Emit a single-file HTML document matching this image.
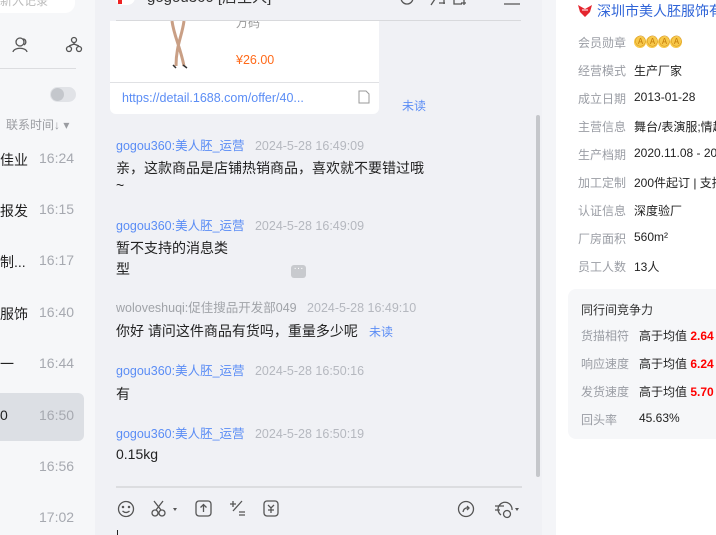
<!DOCTYPE html>
<html><head><meta charset="utf-8"><style>
*{margin:0;padding:0;box-sizing:border-box}
body{width:716px;height:535px;overflow:hidden;position:relative;font-family:"Liberation Sans","Noto Sans CJK SC",sans-serif;background:#f4f5f8}
.a{position:absolute;white-space:nowrap}
#left{left:0;top:0;width:95px;height:535px;background:#f6f7f9}
#mid{left:95px;top:0;width:447px;height:535px;background:#f0f1f5}
#right{left:556px;top:0;width:160px;height:535px;background:#fff}
.t{color:#a6a9b0;font-size:14px;left:39px}
.n{color:#222;font-size:14px;left:0}
.s{color:#5b8df5;font-size:12.5px;left:116px}
.d{color:#b5b8bf}
.m{color:#222;font-size:14px;left:116px}
.l{color:#9a9da4;font-size:12px;left:578px}
.v{color:#222;font-size:12px;left:634px}
.ic{stroke:#555;fill:none;stroke-width:1.3}
</style></head><body>
<div class="a" id="left"></div>
<div class="a" style="left:0;top:-6px;width:75px;height:19px;background:#fff;border-radius:0 0 10px 0"></div>
<div class="a" style="left:0;top:-8px;font-size:12px;color:#bbb">新入记录</div>
<svg class="a" style="left:10px;top:35px" width="80" height="20"><g class="ic" stroke="#666"><circle cx="10" cy="7" r="4"/><path d="M3 17c1-5 13-5 14 0M13 4c3 0 4 4 1 6"/><circle cx="64" cy="5" r="2.5"/><circle cx="59" cy="14" r="2.5"/><circle cx="69" cy="14" r="2.5"/><path d="M64 8v2M59 11l5-2 5 2"/></g></svg>
<div class="a" style="left:0;top:68px;width:76px;height:1px;background:#dcdde0"></div>
<div class="a" style="left:50px;top:87px;width:26px;height:15px;border-radius:8px;background:#e1e3e7"></div>
<div class="a" style="left:51px;top:88px;width:13px;height:13px;border-radius:7px;background:#c4c7cc"></div>
<div class="a" style="left:6px;top:116px;font-size:12px;color:#9a9ca1">联系时间↓ ▾</div>
<div class="a n" style="top:150px">佳业</div><div class="a t" style="top:150px">16:24</div>
<div class="a n" style="top:201px">报发</div><div class="a t" style="top:201px">16:15</div>
<div class="a n" style="top:252px">制...</div><div class="a t" style="top:252px">16:17</div>
<div class="a n" style="top:304px">服饰</div><div class="a t" style="top:304px">16:40</div>
<div class="a n" style="top:354px">一</div><div class="a t" style="top:355px">16:44</div>
<div class="a" style="left:0;top:393px;width:84px;height:48px;background:#dcdfe4;border-radius:0 6px 6px 0"></div>
<div class="a n" style="top:407px">0</div><div class="a t" style="top:407px">16:50</div>
<div class="a t" style="top:458px">16:56</div>
<div class="a t" style="top:509px">17:02</div>

<div class="a" id="mid"></div>
<div class="a" style="left:110px;top:21px;width:269px;height:93px;background:#fff;border-radius:0 0 6px 6px"></div>
<div class="a" style="left:110px;top:82px;width:269px;height:1px;background:#e0e1e4"></div>
<svg class="a" style="left:160px;top:21px" width="40" height="50"><path d="M12 0c2 15 8 25 12 45M24 0c-2 15-8 25-8 45" stroke="#c99f85" stroke-width="3" fill="none"/><path d="M13 44l3 3M23 44l4 3" stroke="#333" stroke-width="1.5"/></svg>
<div class="a" style="left:236px;top:53px;font-size:12.5px;color:#ff6a1a">¥26.00</div>
<div class="a" style="left:236px;top:14px;font-size:12px;color:#999">万码</div>
<div class="a" style="left:95px;top:0;width:447px;height:20px;background:#f0f1f5"></div>
<div class="a" style="left:115px;top:-10px;width:20px;height:15px;border-radius:10px;background:#fff"></div>
<div class="a" style="left:118px;top:-4px;width:4px;height:8px;background:#e22"></div>
<div class="a" style="left:147px;top:-14px;font-size:15px;color:#333">gogou360 [店主人]</div>
<svg class="a" style="left:396px;top:0" width="130" height="8"><g class="ic" stroke="#444" stroke-width="1.6"><circle cx="11" cy="-2" r="6"/><path d="M35 5l4-6M43 3h6M48 -2v6M58 -3v7h8M65 3h5M68 0v5M108 4h16"/></g></svg>
<div class="a" style="left:116px;top:20px;width:405px;height:1px;background:#d8d9dc"></div>
<div class="a" style="left:122px;top:91px;font-size:12.5px;color:#5b8df5">https://detail.1688.com/offer/40...</div>
<svg class="a" style="left:358px;top:90px" width="12" height="14"><path d="M1 1h7l3 3v9H1z" fill="none" stroke="#999"/></svg>
<div class="a" style="left:402px;top:97px;font-size:12px;color:#5b8df5">未读</div>

<div class="a s" style="top:135px">gogou360:美人胚_运营 <span class="d">&nbsp;&nbsp;2024-5-28 16:49:09</span></div>
<div class="a m" style="top:158px">亲，这款商品是店铺热销商品，喜欢就不要错过哦</div>
<div class="a m" style="top:177px">~</div>
<div class="a s" style="top:215px">gogou360:美人胚_运营 <span class="d">&nbsp;&nbsp;2024-5-28 16:49:09</span></div>
<div class="a m" style="top:238px">暂不支持的消息类</div>
<div class="a m" style="top:259px">型</div>
<div class="a" style="left:291px;top:265px;width:15px;height:13px;border-radius:3px;background:#c8cace;color:#fff;font-size:10px;line-height:8px;text-align:center">···</div>
<div class="a s" style="top:297px;color:#a0a3a8">woloveshuqi:促佳搜品开发部049 <span class="d">&nbsp;&nbsp;2024-5-28 16:49:10</span></div>
<div class="a m" style="top:321px">你好 请问这件商品有货吗，重量多少呢</div>
<div class="a" style="left:369px;top:323px;font-size:12px;color:#5b8df5">未读</div>
<div class="a s" style="top:360px">gogou360:美人胚_运营 <span class="d">&nbsp;&nbsp;2024-5-28 16:50:16</span></div>
<div class="a m" style="top:384px">有</div>
<div class="a s" style="top:423px">gogou360:美人胚_运营 <span class="d">&nbsp;&nbsp;2024-5-28 16:50:19</span></div>
<div class="a m" style="top:446px">0.15kg</div>
<div class="a" style="left:536px;top:115px;width:4px;height:362px;border-radius:2px;background:#c5c7cb"></div>
<div class="a" style="left:116px;top:486px;width:406px;height:2px;background:#dcdde0"></div>
<svg class="a" style="left:110px;top:495px" width="420" height="30"><g class="ic"><circle cx="16" cy="14" r="7.5"/><circle cx="13" cy="12" r=".6"/><circle cx="19" cy="12" r=".6"/><path d="M12.5 16q3.5 3 7 0"/><circle cx="45" cy="18" r="3"/><circle cx="52" cy="18" r="3"/><path d="M46 15l7-9M51 15l-7-9"/><rect x="86" y="6" width="15" height="15" rx="3"/><path d="M93.5 17v-7M90.5 12.5l3-3 3 3"/><path d="M123 16l9-10M120 9h6M123 6v6M129 17h6M129 20h6"/><rect x="154" y="6" width="14" height="15" rx="3"/><path d="M158 10l3 3 3-3M161 13v5M158 15h6"/><circle cx="356" cy="14" r="7.5"/><path d="M353 17q1-5 6-4M357 11l2 2-2 2"/><path d="M391 20a7 7 0 1 1 11-5M385 11h9M385 15h5"/><circle cx="397" cy="19" r="3.5"/></g><path d="M63 13h4l-2 3z" fill="#555"/><path d="M405 13h4l-2 3z" fill="#555"/></svg>
<div class="a" style="left:117px;top:530px;width:1px;height:5px;background:#222"></div>

<div class="a" id="right"></div>
<svg class="a" style="left:577px;top:4px" width="16" height="14"><path d="M1 1l7 4 7-4-2 7-5 5-5-5z" fill="#e4262f"/><path d="M5 6h6" stroke="#fff"/></svg>
<div class="a" style="left:597px;top:1px;font-size:14px;color:#2f64d8">深圳市美人胚服饰有</div>
<div class="a l" style="top:34px">会员勋章</div>
<div class="a" style="left:634px;top:33px;font-size:11px;color:#c8820e;letter-spacing:-1px"><span style="background:#f8c94a;border-radius:6px;padding:0 1px">Ⓐ</span><span style="background:#f8c94a;border-radius:6px;padding:0 1px">Ⓐ</span><span style="background:#f8c94a;border-radius:6px;padding:0 1px">Ⓐ</span><span style="background:#f8c94a;border-radius:6px;padding:0 1px">Ⓐ</span></div>
<div class="a l" style="top:62px">经营模式</div><div class="a v" style="top:62px">生产厂家</div>
<div class="a l" style="top:90px">成立日期</div><div class="a v" style="top:90px">2013-01-28</div>
<div class="a l" style="top:118px">主营信息</div><div class="a v" style="top:118px">舞台/表演服;情趣</div>
<div class="a l" style="top:146px">生产档期</div><div class="a v" style="top:146px">2020.11.08 - 20</div>
<div class="a l" style="top:174px">加工定制</div><div class="a v" style="top:174px">200件起订 | 支持</div>
<div class="a l" style="top:202px">认证信息</div><div class="a v" style="top:202px">深度验厂</div>
<div class="a l" style="top:230px">厂房面积</div><div class="a v" style="top:230px">560m²</div>
<div class="a l" style="top:258px">员工人数</div><div class="a v" style="top:258px">13人</div>
<div class="a" style="left:568px;top:289px;width:160px;height:150px;background:#f6f7f9;border-radius:8px"></div>
<div class="a" style="left:581px;top:301px;font-size:12px;color:#333">同行间竞争力</div>
<div class="a l" style="top:327px;left:581px">货描相符</div><div class="a v" style="top:327px;left:639px">高于均值 <b style="color:#f00">2.64</b></div>
<div class="a l" style="top:355px;left:581px">响应速度</div><div class="a v" style="top:355px;left:639px">高于均值 <b style="color:#f00">6.24</b></div>
<div class="a l" style="top:383px;left:581px">发货速度</div><div class="a v" style="top:383px;left:639px">高于均值 <b style="color:#f00">5.70</b></div>
<div class="a l" style="top:411px;left:581px">回头率</div><div class="a v" style="top:411px;left:639px">45.63%</div>
</body></html>
